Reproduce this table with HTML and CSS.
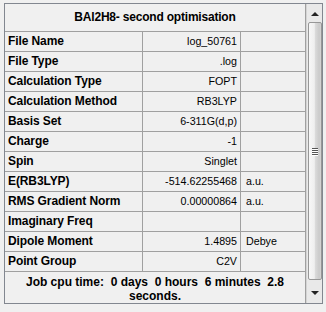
FILE: index.html
```html
<!DOCTYPE html>
<html lang="en">
<head>
  <meta charset="UTF-8" />
  <title>Summary</title>
  <link rel="stylesheet" href="styles.css">
</head>
<body>
  <div class="panel">
    <div class="grid">
      <div class="title">BAl2H8- second optimisation</div>

      <div class="label">File Name</div><div class="value">log_50761</div><div class="unit"></div>
      <div class="label">File Type</div><div class="value">.log</div><div class="unit"></div>
      <div class="label">Calculation Type</div><div class="value">FOPT</div><div class="unit"></div>
      <div class="label">Calculation Method</div><div class="value">RB3LYP</div><div class="unit"></div>
      <div class="label">Basis Set</div><div class="value">6-311G(d,p)</div><div class="unit"></div>
      <div class="label">Charge</div><div class="value">-1</div><div class="unit"></div>
      <div class="label">Spin</div><div class="value">Singlet</div><div class="unit"></div>
      <div class="label">E(RB3LYP)</div><div class="value">-514.62255468</div><div class="unit">a.u.</div>
      <div class="label">RMS Gradient Norm</div><div class="value">0.00000864</div><div class="unit">a.u.</div>
      <div class="label">Imaginary Freq</div><div class="value"></div><div class="unit"></div>
      <div class="label">Dipole Moment</div><div class="value">1.4895</div><div class="unit">Debye</div>
      <div class="label">Point Group</div><div class="value">C2V</div><div class="unit"></div>

      <div class="footer">Job cpu time:  0 days  0 hours  6 minutes  2.8 seconds.</div>
    </div>

    <div class="scrollbar">
      <div class="btn"><span class="arrow up"></span></div>
      <div class="thumb"><span class="grip"></span></div>
      <div class="btn"><span class="arrow down"></span></div>
    </div>
  </div>
</body>
</html>
```

FILE: styles.css
```css
:root {
  --bg: #f0f0f0;
  --grid-line: #a0a0a0;
  --frame: #828790;
  --text: #000;
}

body {
  margin: 3px 0 0 4px;
  background: var(--bg);
  color: var(--text);
  font-family: "Liberation Sans", Arial, sans-serif;
}

.panel {
  display: flex;
  width: 319px;
  height: 301px;
  box-sizing: border-box;
  border: 1px solid var(--frame);
  background: var(--bg);
}

/* table: gaps show through as grid lines */
.grid {
  display: grid;
  grid-template-columns: 137px 97px 64px;
  grid-template-rows: 27px repeat(12, 19px) 31px;
  gap: 1px;
  padding-right: 1px;
  background: var(--grid-line);
  align-self: flex-start;
}

.grid > div {
  background: var(--bg);
  line-height: 19px;
  white-space: nowrap;
  overflow: hidden;
}

.title {
  grid-column: 1 / -1;
  text-align: center;
  font-weight: bold;
  font-size: 12px;
  line-height: 27px !important;
  letter-spacing: -0.2px;
}

.label {
  padding-left: 3px;
  font-weight: bold;
  font-size: 12px;
  letter-spacing: -0.1px;
}

.value {
  text-align: right;
  padding-right: 3px;
  font-size: 10.7px;
}

.unit {
  padding-left: 5px;
  font-size: 10.7px;
}

.footer {
  grid-column: 1 / -1;
  text-align: center;
  font-weight: bold;
  font-size: 12px;
  line-height: 14px !important;
  white-space: pre-wrap !important;
  padding: 3px 10px 0;
}

/* vertical scrollbar */
.scrollbar {
  width: 16px;
  display: flex;
  flex-direction: column;
  background: #e9e9e9;
  border-left: 1px solid #d4d4d4;
  box-sizing: border-box;
}

.btn {
  height: 17px;
  display: flex;
  align-items: center;
  justify-content: center;
}

.btn:last-child {
  flex: 1;
}

.arrow {
  width: 0;
  height: 0;
  border-left: 4px solid transparent;
  border-right: 4px solid transparent;
}

.arrow.up {
  border-bottom: 4px solid #222;
  margin-top: 2px;
}

.arrow.down {
  border-top: 4px solid #222;
  margin-top: 2px;
}

.thumb {
  height: 258px;
  margin: 1px 0 0 1px;
  width: 14px;
  box-sizing: border-box;
  border: 1px solid #979797;
  border-radius: 2px;
  background: linear-gradient(to right, #f7f7f7 0%, #efefef 45%, #dcdcdc 50%, #cacaca 85%, #d6d6d6 100%);
  display: flex;
  align-items: center;
  justify-content: center;
}

.grip {
  width: 6px;
  height: 1px;
  margin-top: -6px;
  background: #555;
  box-shadow: 0 1px 0 #fff, 0 2px 0 #555, 0 3px 0 #fff, 0 4px 0 #555, 0 5px 0 #fff, 0 6px 0 #555, 0 7px 0 #fff;
}
```
